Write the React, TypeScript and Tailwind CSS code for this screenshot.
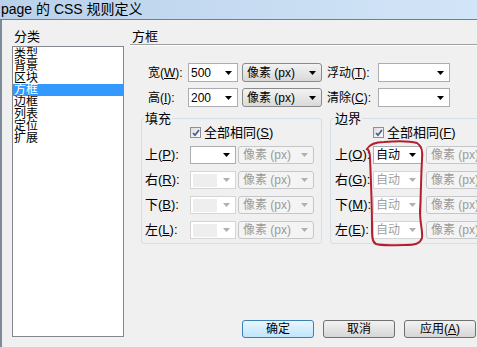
import React from 'react'

const font = "font-['Liberation_Sans','Noto_Sans_CJK_SC',sans-serif]"

const categories = ['类型', '背景', '区块', '方框', '边框', '列表', '定位', '扩展']

const Arrow = ({ gray }: { gray?: boolean }) => (
  <svg width="7" height="4" viewBox="0 0 7 4" className="shrink-0">
    <path d="M0 0h7L3.5 4z" fill={gray ? '#b0b0b0' : '#000'} />
  </svg>
)

const Key = ({ ch, k }: { ch: string; k: string }) => (
  <span className="whitespace-nowrap">
    {ch}(<u>{k}</u>):
  </span>
)

// white editable combo box
const Combo = ({ value, w, disabled, grayField }: { value?: string; w: string; disabled?: boolean; grayField?: boolean }) => (
  <div
    className={`flex h-full ${w} shrink-0 items-center gap-[2px] border bg-white pl-[2px] pr-[5px] ${
      disabled ? 'border-[#d5d5d5] text-[#a0a0a0]' : 'border-[#abadb3] text-black'
    }`}
  >
    {grayField ? (
      <span className="mr-[4px] h-[13px] flex-1 bg-[#eeeeee]" />
    ) : (
      <span className="flex-1 leading-none">{value}</span>
    )}
    <Arrow gray={disabled} />
  </div>
)

// win7 style drop-down list
const Select = ({ w, disabled }: { w: string; disabled?: boolean }) => (
  <div
    className={`flex h-full ${w} items-center rounded-[3px] border pl-[4px] pr-[5px] ${
      disabled
        ? 'border-[#c4c6c8] bg-[#f4f4f4] text-[#9a9a9a]'
        : 'border-[#8a8a8a] bg-gradient-to-b from-[#f3f3f3] to-[#d9d9d9] text-black'
    }`}
  >
    <span className="flex-1 whitespace-nowrap leading-none">像素 (px)</span>
    <Arrow gray={disabled} />
  </div>
)

const Check = ({ label, k }: { label: string; k: string }) => (
  <div className="flex h-[13px] items-center gap-[3px]">
    <span className="flex h-[11px] w-[11px] items-center justify-center border border-[#8f8f8f] bg-gradient-to-br from-[#dcdcdc] to-white">
      <svg width="8" height="8" viewBox="0 0 8 8">
        <path d="M1 4l2 2.2L7 1" stroke="#4a5f97" strokeWidth="1.8" fill="none" />
      </svg>
    </span>
    <span className="whitespace-nowrap text-[13px] leading-none">
      {label}(<u>{k}</u>)
    </span>
  </div>
)

const Button = ({ children, primary }: { children: React.ReactNode; primary?: boolean }) => (
  <div
    className={`flex h-[18px] w-[72px] items-center justify-center rounded-[3px] border text-[12px] ${
      primary
        ? 'border-[#3c7fb1] bg-gradient-to-b from-[#eaf6fd] to-[#bee6fd]'
        : 'border-[#707070] bg-gradient-to-b from-[#f2f2f2] to-[#d6d6d6]'
    }`}
  >
    {children}
  </div>
)

export default function App() {
  return (
    <div className={`relative h-[347px] w-[477px] overflow-hidden bg-[#f0f0f0] text-[12px] text-black ${font}`}>
      {/* title bar */}
      <div className="h-[20px] border-b border-[#6f7f90] bg-gradient-to-r from-[#b9d1ea] via-[#c6dbf1] to-[#d3e5f8] pl-[1px] text-[14px] leading-[18px]">
        page 的 CSS 规则定义
      </div>

      <div className="flex h-[327px] border-l-[2px] border-[#7d8a99]">
        {/* category list */}
        <div className="ml-[10px] flex w-[112px] shrink-0 flex-col pt-[9px]">
          <div className="h-[17px] pl-[2px] text-[13px] leading-[15px]">分类</div>
          <div className="h-[291px] border border-[#828790] bg-white pt-[1px]">
            {categories.map((c) => (
              <div
                key={c}
                className={`h-[12px] pl-[1px] text-[12px] leading-[12px] ${c === '方框' ? 'bg-[#3399ff] text-white' : ''}`}
              >
                {c}
              </div>
            ))}
          </div>
        </div>

        {/* box panel */}
        <div className="ml-[5px] flex min-w-0 flex-1 flex-col">
          <div className="pl-[3px] pt-[9px] text-[13px] leading-[15px]">方框</div>
          <div className="ml-[1px] h-[2px] border-t border-b border-t-[#a0a0a0] border-b-white" />

          <div className="mt-[17px] flex flex-col gap-[6px] pl-[19px]">
            <div className="flex h-[19px] items-center">
              <div className="w-[40px] shrink-0"><Key ch="宽" k="W" /></div>
              <Combo value="500" w="w-[50px]" />
              <div className="ml-[4px] h-full"><Select w="w-[80px]" /></div>
              <div className="ml-[5px] w-[51px] shrink-0"><Key ch="浮动" k="T" /></div>
              <Combo w="w-[72px]" />
            </div>
            <div className="flex h-[19px] items-center">
              <div className="w-[40px] shrink-0"><Key ch="高" k="I" /></div>
              <Combo value="200" w="w-[50px]" />
              <div className="ml-[4px] h-full"><Select w="w-[80px]" /></div>
              <div className="ml-[5px] w-[51px] shrink-0"><Key ch="清除" k="C" /></div>
              <Combo w="w-[72px]" />
            </div>
          </div>

          <div className="ml-[12px] mt-[4px] flex gap-[8px]">
            {/* padding group */}
            <fieldset className="w-[181px] shrink-0 rounded-[3px] border border-[#d5dfe5] pb-[4px]">
              <legend className="ml-[2px] px-[1px] text-[13px] leading-[15px]">填充</legend>
              <div className="pl-[48px]"><Check label="全部相同" k="S" /></div>
              <div className="mt-[7px] flex flex-col gap-[7px] pl-[3px]">
                {[
                  ['上', 'P'],
                  ['右', 'R'],
                  ['下', 'B'],
                  ['左', 'L'],
                ].map(([ch, k], i) => (
                  <div key={k} className="flex h-[18px] items-center">
                    <div className="w-[45px] shrink-0 text-[13px]"><Key ch={ch} k={k} /></div>
                    <Combo w="w-[46px]" disabled={i > 0} grayField={i > 0} />
                    <div className="ml-[2px] h-full"><Select w="w-[76px]" disabled /></div>
                  </div>
                ))}
              </div>
            </fieldset>

            {/* margin group */}
            <fieldset className="w-[180px] shrink-0 rounded-[3px] border border-[#d5dfe5] pb-[4px]">
              <legend className="ml-[3px] px-[1px] text-[13px] leading-[15px]">边界</legend>
              <div className="pl-[42px]"><Check label="全部相同" k="F" /></div>
              <div className="mt-[7px] flex flex-col gap-[7px] pl-[4px]">
                {[
                  ['上', 'O'],
                  ['右', 'G'],
                  ['下', 'M'],
                  ['左', 'E'],
                ].map(([ch, k], i) => (
                  <div key={k} className="flex h-[18px] items-center">
                    <div className="w-[38px] shrink-0 text-[13px]"><Key ch={ch} k={k} /></div>
                    <Combo value="自动" w="w-[49px]" disabled={i > 0} />
                    <div className="ml-[4px] h-full"><Select w="w-[76px]" disabled /></div>
                  </div>
                ))}
              </div>
            </fieldset>
          </div>

          <div className="mt-auto mb-[9px] flex justify-end gap-[9px] pr-[1px]">
            <Button primary>确定</Button>
            <Button>取消</Button>
            <Button>
              <span>应用(<u>A</u>)</span>
            </Button>
          </div>
        </div>
      </div>

      {/* red hand-drawn mark */}
      <svg className="pointer-events-none absolute left-[360px] top-[136px]" width="72" height="116" viewBox="0 0 72 116">
        <path
          d="M7 13 C10 8 16 6 24 6 C36 5 50 5 57 7 C62 10 63 16 62 24 C61 40 61 60 60 75 C60 88 63 96 62 102 C60 108 55 109 45 109 C33 109 22 110 16 108 C12 106 12 100 12 92 C12 72 11 45 10 22 C10 17 9 14 7 13 Z"
          stroke="#b41f2d"
          strokeWidth="2"
          fill="none"
        />
      </svg>
    </div>
  )
}
